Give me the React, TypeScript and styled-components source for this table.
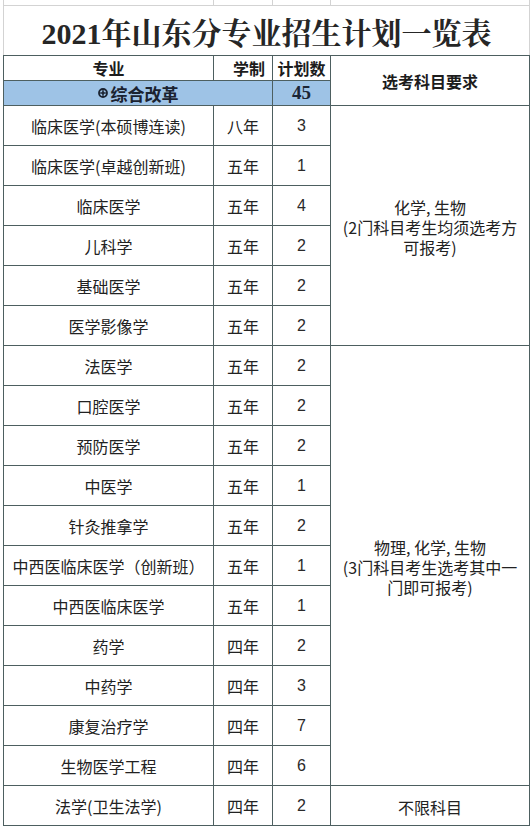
import React from "react";
import styled, { createGlobalStyle } from "styled-components";

const GlobalStyle = createGlobalStyle`
  html, body { margin: 0; padding: 0; background: #ffffff; }
  body { font-family: "Noto Sans CJK SC", "Noto Sans", sans-serif; color: #1e1e1e; }
`;

const LINE = "#4d5f60";
const GRID = "#d3d3d3";
const COLS = "209px 58px 57px 198px";

const Page = styled.div`
  padding-left: 3px;
  width: 529px;
`;

const TopStrip = styled.div`
  display: grid;
  grid-template-columns: ${COLS};
  column-gap: 1px;
  width: 525px;
  height: 5px;
  padding: 0 1px;
  background: ${GRID};
  border-bottom: 1px solid ${GRID};
`;

const StripCell = styled.div`
  background: #ffffff;
`;

const TitleCell = styled.h1`
  margin: 0;
  box-sizing: border-box;
  width: 527px;
  height: 49px;
  padding-top: 1px;
  border-left: 1px solid ${GRID};
  border-right: 1px solid ${GRID};
  display: flex;
  align-items: center;
  justify-content: center;
  font-family: "Liberation Serif", "Noto Serif CJK SC", "Noto Sans CJK SC", serif;
  font-weight: 700;
  font-size: 30px;
  letter-spacing: 0;
  color: #262626;
  white-space: nowrap;
`;

const Table = styled.div`
  display: grid;
  grid-template-columns: ${COLS};
  grid-template-rows: 24px 24px repeat(18, 39px);
  gap: 1px;
  width: 525px;
  background: ${LINE};
  border: 1px solid ${LINE};
`;

const BaseCell = styled.div`
  background: #ffffff;
  display: flex;
  align-items: center;
  justify-content: center;
  white-space: nowrap;
  overflow: hidden;
`;

const HeaderCell = styled(BaseCell)<{ $align?: "center" | "end"; $rowSpan?: number }>`
  justify-content: ${(p) => (p.$align === "end" ? "flex-end" : "center")};
  padding-right: ${(p) => (p.$align === "end" ? "7px" : "0")};
  grid-row: span ${(p) => p.$rowSpan ?? 1};
  font-weight: 700;
  font-size: 16px;
  color: #1c1c1c;
`;

const GroupCell = styled(BaseCell)<{ $colSpan?: number }>`
  grid-column: span ${(p) => p.$colSpan ?? 1};
  background: #9ec3e6;
  font-weight: 700;
  font-size: 17px;
  color: #1a2230;
  gap: 3px;
`;

const GroupCount = styled(GroupCell)`
  font-family: "Liberation Serif", serif;
  font-size: 19px;
  color: #1b2536;
`;

const NameCell = styled(BaseCell)`
  font-size: 16px;
  color: #222222;
`;

const YearCell = styled(BaseCell)`
  font-size: 16px;
  color: #222222;
`;

const CountCell = styled(BaseCell)`
  font-size: 16px;
  color: #2a2a2a;
  font-family: "Liberation Sans", "Noto Sans CJK SC", sans-serif;
  font-weight: 400;
`;

const RequirementCell = styled(BaseCell)<{ $rowSpan: number }>`
  grid-row: span ${(p) => p.$rowSpan};
  flex-direction: column;
  font-size: 16px;
  line-height: 20px;
  color: #222222;
  padding-top: 2px;
`;

const ReqLine = styled.span`
  display: block;
  text-align: center;
`;

const PlusIcon = () => (
  <svg width="10" height="10" viewBox="0 0 10 10" aria-hidden="true">
    <circle cx="5" cy="5" r="4" fill="none" stroke="#1a2230" strokeWidth="1.8" />
    <path d="M5 2.2 V7.8 M2.2 5 H7.8" stroke="#1a2230" strokeWidth="1.6" />
  </svg>
);

type Row = { name: string; years: string; count: string };

const rows: Row[] = [
  { name: "临床医学(本硕博连读)", years: "八年", count: "3" },
  { name: "临床医学(卓越创新班)", years: "五年", count: "1" },
  { name: "临床医学", years: "五年", count: "4" },
  { name: "儿科学", years: "五年", count: "2" },
  { name: "基础医学", years: "五年", count: "2" },
  { name: "医学影像学", years: "五年", count: "2" },
  { name: "法医学", years: "五年", count: "2" },
  { name: "口腔医学", years: "五年", count: "2" },
  { name: "预防医学", years: "五年", count: "2" },
  { name: "中医学", years: "五年", count: "1" },
  { name: "针灸推拿学", years: "五年", count: "2" },
  { name: "中西医临床医学（创新班）", years: "五年", count: "1" },
  { name: "中西医临床医学", years: "五年", count: "1" },
  { name: "药学", years: "四年", count: "2" },
  { name: "中药学", years: "四年", count: "3" },
  { name: "康复治疗学", years: "四年", count: "7" },
  { name: "生物医学工程", years: "四年", count: "6" },
  { name: "法学(卫生法学)", years: "四年", count: "2" },
];

const requirements: { start: number; span: number; lines: string[] }[] = [
  { start: 0, span: 6, lines: ["化学, 生物", "(2门科目考生均须选考方", "可报考)"] },
  { start: 6, span: 11, lines: ["物理, 化学, 生物", "(3门科目考生选考其中一", "门即可报考)"] },
  { start: 17, span: 1, lines: ["不限科目"] },
];

export default function App() {
  return (
    <Page>
      <GlobalStyle />
      <TopStrip>
        <StripCell />
        <StripCell />
        <StripCell />
        <StripCell />
      </TopStrip>
      <TitleCell>2021年山东分专业招生计划一览表</TitleCell>
      <Table>
        <HeaderCell>专业</HeaderCell>
        <HeaderCell $align="end">学制</HeaderCell>
        <HeaderCell>计划数</HeaderCell>
        <HeaderCell $rowSpan={2}>选考科目要求</HeaderCell>
        <GroupCell $colSpan={2}>
          <PlusIcon />
          综合改革
        </GroupCell>
        <GroupCount>45</GroupCount>
        {rows.map((r, i) => {
          const req = requirements.find((q) => q.start === i);
          return (
            <React.Fragment key={r.name}>
              <NameCell>{r.name}</NameCell>
              <YearCell>{r.years}</YearCell>
              <CountCell>{r.count}</CountCell>
              {req && (
                <RequirementCell $rowSpan={req.span}>
                  {req.lines.map((l) => (
                    <ReqLine key={l}>{l}</ReqLine>
                  ))}
                </RequirementCell>
              )}
            </React.Fragment>
          );
        })}
      </Table>
    </Page>
  );
}
